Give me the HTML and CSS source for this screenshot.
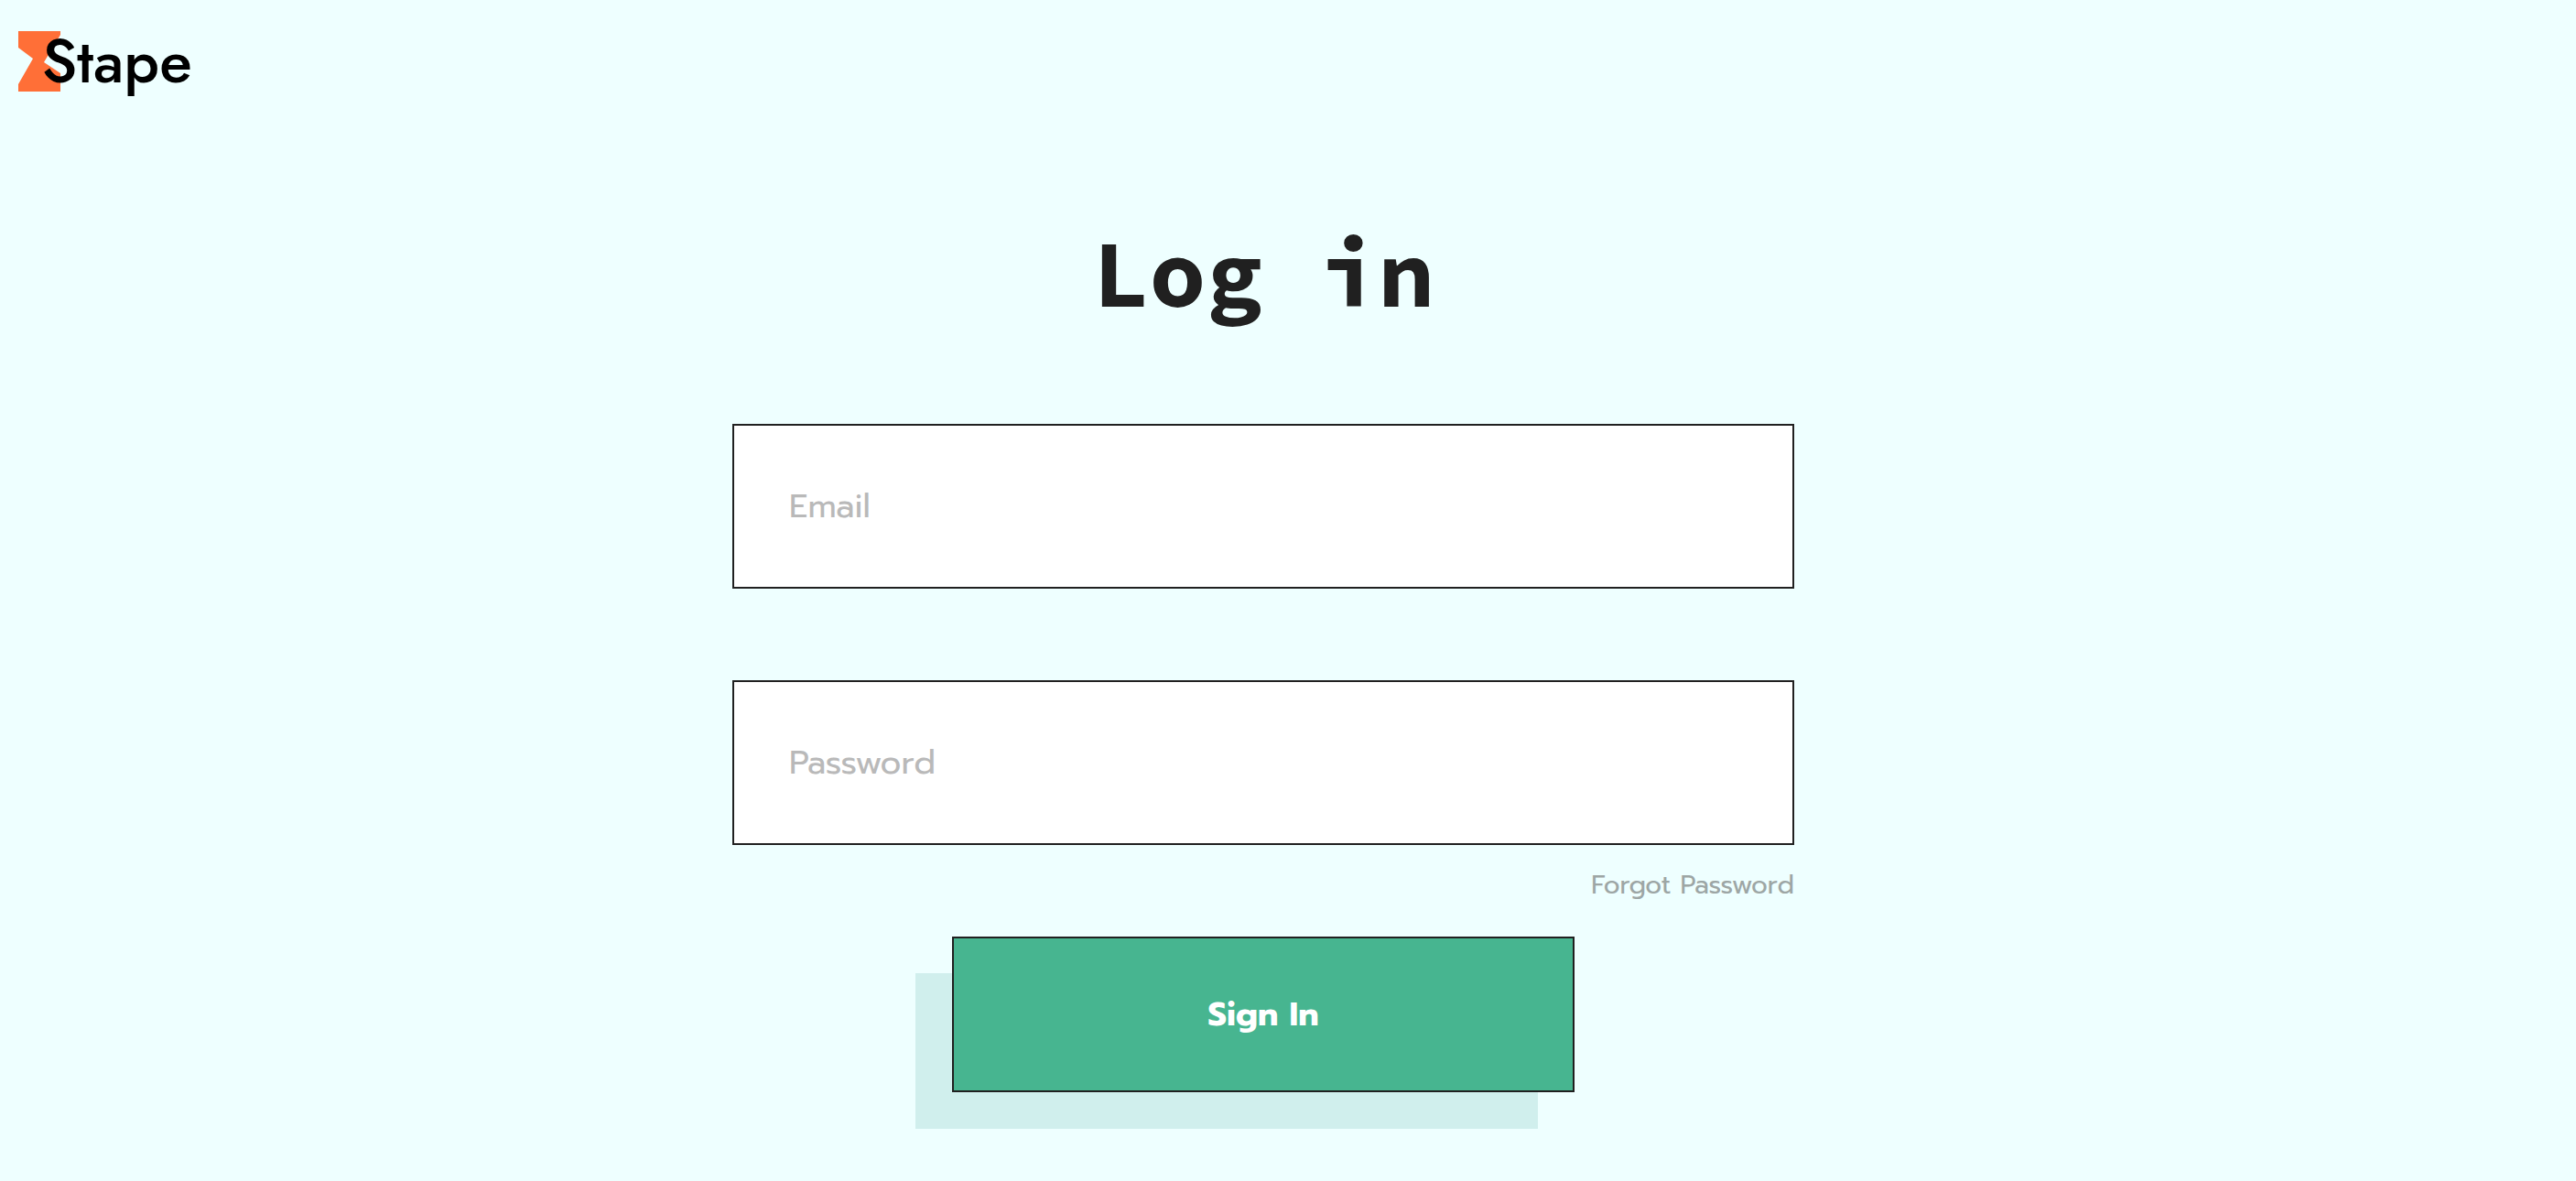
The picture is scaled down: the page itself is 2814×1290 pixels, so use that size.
FILE: index.html
```html
<!DOCTYPE html>
<html lang="en">
<head>
    <meta charset="UTF-8">
    <meta name="viewport" content="width=device-width, initial-scale=1.0">
    <title>Stape - Log in</title>
    <link rel="stylesheet" href="styles.css">
</head>
<body>
    <header class="header">
        <a href="#" class="logo">
            <svg class="logo-mark" viewBox="0 0 46 66" aria-hidden="true">
                <path d="M0 0H46V4L28 34L46 46V66H0V58L16 30L0 18Z" fill="#ff6f37"/>
            </svg>
            <span class="logo-text">Stape</span>
        </a>
    </header>

    <main class="login">
        <h1>Log in</h1>

        <form class="login-form">
            <input type="email" id="email" class="field" placeholder="Email" aria-label="Email">
            <input type="password" id="password" class="field" placeholder="Password" aria-label="Password">
            <a href="#" class="forgot">Forgot Password</a>
            <button type="submit" class="sign-in">Sign In</button>
        </form>
    </main>
</body>
</html>
```

FILE: styles.css
```css
* {
    box-sizing: border-box;
}

body {
    margin: 0;
    font-family: Prompt, Lato, sans-serif;
    background-color: #eeffff;
    color: #202020;
}

.header {
    display: flex;
    padding: 34px 20px 0;
}

.logo {
    display: flex;
    align-items: flex-start;
    color: #000;
    text-decoration: none;
}

.logo-mark {
    width: 46px;
    height: 66px;
}

.logo-text {
    margin-left: -20px;
    font-family: Futura, Jost, Lato, sans-serif;
    font-size: 66px;
    font-weight: 500;
    line-height: 66px;
    z-index: 1;
}

.login {
    padding: 138px 54px 56px 0;
}

h1 {
    margin: 0 0 105px;
    font-family: "Source Code Pro", "Liberation Mono", monospace;
    font-size: 104px;
    font-weight: 700;
    line-height: 120px;
    text-align: center;
}

.login-form {
    display: flex;
    flex-direction: column;
    width: 100%;
    max-width: 1160px;
    margin: 0 auto;
}

.field {
    width: 100%;
    height: 180px;
    padding: 0 60px;
    border: 2px solid #202020;
    border-radius: 0;
    background-color: #fff;
    color: #202020;
    font-family: inherit;
    font-size: 36px;
}

.field + .field {
    margin-top: 100px;
}

.field::placeholder {
    color: #b9b9b9;
    opacity: 1;
}

.forgot {
    align-self: flex-end;
    margin: 14px 0 26px;
    color: #9da6a5;
    font-size: 28px;
    line-height: 60px;
    text-decoration: none;
}

.sign-in {
    align-self: center;
    width: 100%;
    max-width: 680px;
    height: 170px;
    border: 2px solid #202020;
    background-color: #47b590;
    box-shadow: -40px 40px 0 #d0efed;
    color: #fff;
    font-family: inherit;
    font-size: 36px;
    font-weight: 700;
    cursor: pointer;
}
```
